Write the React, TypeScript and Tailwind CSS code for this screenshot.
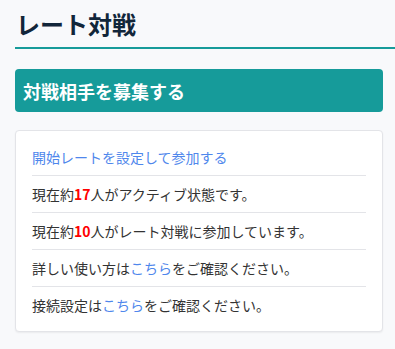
import React from 'react';

const Link: React.FC<{ children: React.ReactNode }> = ({ children }) => (
  <a href="#" className="text-[#4f87ec]">{children}</a>
);

const Num: React.FC<{ children: React.ReactNode }> = ({ children }) => (
  <span className="font-bold text-[#ff0000]">{children}</span>
);

export default function App() {
  const rows: React.ReactNode[] = [
    <Link>開始レートを設定して参加する</Link>,
    <>現在約<Num>17</Num>人がアクティブ状態です。</>,
    <>現在約<Num>10</Num>人がレート対戦に参加しています。</>,
    <>詳しい使い方は<Link>こちら</Link>をご確認ください。</>,
    <>接続設定は<Link>こちら</Link>をご確認ください。</>,
  ];

  return (
    <div
      className="min-h-[349px] w-[395px] bg-[#f8f9fb] pl-[15px] pr-[12px] pt-[7px]"
      style={{ fontFamily: '"Noto Sans CJK JP", "Noto Sans", sans-serif' }}
    >
      <h1 className="-mr-[12px] border-b-2 border-[#169b9a] pb-[6px] pl-[1px] text-[24px] font-bold leading-[34px] text-[#12263a]">
        レート対戦
      </h1>

      <div className="mt-[20px] flex h-[43px] items-center rounded-[4px] bg-[#169b9a] px-[8px]">
        <h2 className="text-[18px] font-bold leading-[26px] text-white">対戦相手を募集する</h2>
      </div>

      <div className="mt-[18px] rounded-[4px] border border-[#e3e4e8] bg-white px-[16px] py-[8px] shadow-[0_1px_2px_rgba(0,0,0,0.06)]">
        {rows.map((row, i) => (
          <div
            key={i}
            className={`py-[8px] text-[14px] leading-[20px] text-[#333] ${i < rows.length - 1 ? 'border-b border-[#e3e4e8]' : ''}`}
          >
            {row}
          </div>
        ))}
      </div>
    </div>
  );
}
